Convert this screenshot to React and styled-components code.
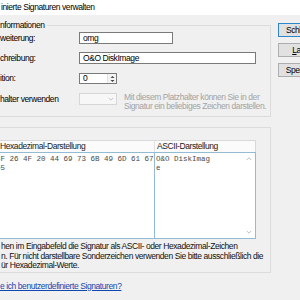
import React from "react";
import styled, { createGlobalStyle } from "styled-components";

const GlobalStyle = createGlobalStyle`
  html, body { margin: 0; padding: 0; overflow: hidden; background: #f0f0f0; }
  body { font-family: "Liberation Sans", Arial, sans-serif; }
`;

const Screen = styled.div`
  width: 300px;
  height: 300px;
  overflow: hidden;
  background: #f0f0f0;
  font-family: "Liberation Sans", Arial, sans-serif;
  font-size: 8.5px;
  letter-spacing: -0.42px;
  color: #000;
  display: flex;
  flex-direction: column;
`;

const TitleBar = styled.div`
  height: 15px;
  line-height: 15px;
  background: #fff;
  padding-left: 1px;
  white-space: nowrap;
  flex-shrink: 0;
`;

const Body = styled.div`
  display: flex;
  align-items: flex-start;
  margin-left: -10px;
`;

const Main = styled.div`
  width: 281px;
  flex-shrink: 0;
  display: flex;
  flex-direction: column;
`;

const Group = styled.fieldset`
  box-sizing: border-box;
  width: 281px;
  min-inline-size: 0;
  margin: ${(p) => p.$top}px 0 0 0;
  padding: ${(p) => p.$pad};
  border: 1px solid #dcdcdc;
`;

const Legend = styled.legend`
  padding: 0 2px 0 0;
  margin: 0;
  line-height: 10px;
  white-space: nowrap;
`;

const FormGrid = styled.div`
  display: grid;
  grid-template-columns: 79px auto;
  grid-template-rows: 12px 12px 12px auto;
  row-gap: 8px;
`;

const Label = styled.div`
  line-height: 12px;
  white-space: nowrap;
  margin-top: ${(p) => p.$mt || 0}px;
`;

const Field = styled.div`
  box-sizing: border-box;
  width: ${(p) => p.$w}px;
  height: 12px;
  border: 1px solid #7a7a7a;
  background: #fff;
  padding-left: 3px;
  line-height: 10px;
  white-space: nowrap;
`;

const Spinner = styled.div`
  box-sizing: border-box;
  width: 38px;
  height: 11px;
  margin-top: 1px;
  border: 1px solid #7a7a7a;
  background: #fff;
  display: flex;
  align-items: stretch;
`;

const SpinValue = styled.div`
  flex: 1;
  padding-left: 3px;
  line-height: 9px;
`;

const SpinButtons = styled.div`
  width: 8px;
  display: flex;
  flex-direction: column;
  align-items: center;
  justify-content: center;
  background: #f4f4f4;
  border-left: 1px solid #e2e2e2;
`;

const PlaceholderRow = styled.div`
  display: flex;
  align-items: flex-start;
  gap: 7px;
`;

const Combo = styled.div`
  box-sizing: border-box;
  width: 38px;
  height: 12px;
  margin-top: 1px;
  border: 1px solid #d6d6d6;
  background: #f7f7f7;
  display: flex;
  justify-content: flex-end;
  align-items: center;
  padding-right: 2px;
  flex-shrink: 0;
`;

const DisabledText = styled.div`
  color: #a3a3a3;
  line-height: 9px;
  margin-top: 1px;
  white-space: nowrap;
`;

const Panel = styled.div`
  width: 265px;
  display: flex;
  flex-direction: column;
`;

const PanelHeader = styled.div`
  display: grid;
  grid-template-columns: 163px 1fr;
  height: 12px;
  box-sizing: border-box;
  border-top: 1px solid #d9d9d9;
  border-right: 1px solid #d9d9d9;
  background: #fbfbfb;
`;

const HeaderCell = styled.div`
  line-height: 11px;
  color: #1a1a1a;
  white-space: nowrap;
  padding-left: ${(p) => p.$pl}px;
  border-left: ${(p) => (p.$sep ? "1px solid #e3e3e3" : "none")};
`;

const PanelBody = styled.div`
  display: grid;
  grid-template-columns: 163px 102px;
  height: 87px;
`;

const HexBox = styled.div`
  box-sizing: border-box;
  border: 1px solid #93bbd2;
  border-right: none;
  background: #fff;
  padding: 2px 0 0 4px;
`;

const AsciiBox = styled.div`
  box-sizing: border-box;
  border: 1px solid #93bbd2;
  background: #fff;
  display: flex;
`;

const AsciiText = styled.div`
  flex: 1;
  padding: 2px 0 0 1px;
`;

const MonoLine = styled.div`
  font-family: "Liberation Mono", "Courier New", monospace;
  font-size: 7.5px;
  letter-spacing: 0;
  line-height: 9px;
  height: 9px;
  color: #4a4a4a;
  white-space: pre;
`;

const ScrollBar = styled.div`
  width: 12px;
  display: flex;
  flex-direction: column;
  justify-content: space-between;
  align-items: center;
  padding: 3px 0;
`;

const Description = styled.div`
  margin-top: 3px;
  padding-left: 10px;
  white-space: nowrap;
  line-height: 9.5px;
  color: #111;
`;

const HelpLink = styled.a`
  display: block;
  margin-top: 8px;
  padding-left: 10px;
  line-height: 10px;
  color: #1048b0;
  text-decoration: underline;
  white-space: nowrap;
`;

const ButtonColumn = styled.div`
  margin-left: 7px;
  padding-top: 8px;
  display: flex;
  flex-direction: column;
  gap: 6px;
  flex-shrink: 0;
`;

const Button = styled.div`
  box-sizing: border-box;
  width: 50px;
  height: 14px;
  line-height: 12px;
  text-align: center;
  background: #e1e1e1;
  border: 1px solid ${(p) => (p.$default ? "#2f86c9" : "#adadad")};
  white-space: nowrap;
`;

const Key = styled.span`
  text-decoration: underline;
`;

const Chevron = ({ up, color = "#b5b5b5" }) => (
  <svg width="6" height="6" viewBox="0 0 6 6">
    <polyline
      points={up ? "0.8,4 3,1.8 5.2,4" : "0.8,2 3,4.2 5.2,2"}
      fill="none"
      stroke={color}
      strokeWidth="0.9"
    />
  </svg>
);

const SpinArrows = () => (
  <svg width="5" height="8" viewBox="0 0 5 8">
    <polygon points="0.5,3 2.5,1 4.5,3" fill="#444" />
    <polygon points="0.5,5 2.5,7 4.5,5" fill="#444" />
  </svg>
);

export default function App() {
  return (
    <>
      <GlobalStyle />
      <Screen>
        <TitleBar>inierte Signaturen verwalten</TitleBar>
        <Body>
          <Main>
            <Group $top={5} $pad="2px 0 5px 9px">
              <Legend>nformationen</Legend>
              <FormGrid>
                <Label>weiterung:</Label>
                <Field $w={94}>omg</Field>
                <Label>chreibung:</Label>
                <Field $w={177}>O&amp;O DiskImage</Field>
                <Label>ition:</Label>
                <Spinner>
                  <SpinValue>0</SpinValue>
                  <SpinButtons>
                    <SpinArrows />
                  </SpinButtons>
                </Spinner>
                <Label $mt={1}>halter verwenden</Label>
                <PlaceholderRow>
                  <Combo>
                    <Chevron color="#bdbdbd" />
                  </Combo>
                  <DisabledText>
                    Mit diesem Platzhalter können Sie in der
                    <br />
                    Signatur ein beliebiges Zeichen darstellen.
                  </DisabledText>
                </PlaceholderRow>
              </FormGrid>
            </Group>

            <Group $top={10} $pad="12px 0 1px 0">
              <Panel>
                <PanelHeader>
                  <HeaderCell $pl={9}>Hexadezimal-Darstellung</HeaderCell>
                  <HeaderCell $pl={2} $sep>
                    ASCII-Darstellung
                  </HeaderCell>
                </PanelHeader>
                <PanelBody>
                  <HexBox>
                    <MonoLine>4F 26 4F 20 44 69 73 6B 49 6D 61 67</MonoLine>
                    <MonoLine>65</MonoLine>
                  </HexBox>
                  <AsciiBox>
                    <AsciiText>
                      <MonoLine>O&amp;O DiskImag</MonoLine>
                      <MonoLine>e</MonoLine>
                    </AsciiText>
                    <ScrollBar>
                      <Chevron up />
                      <Chevron />
                    </ScrollBar>
                  </AsciiBox>
                </PanelBody>
              </Panel>
              <Description>
                hen im Eingabefeld die Signatur als ASCII- oder Hexadezimal-Zeichen
                <br />
                n. Für nicht darstellbare Sonderzeichen verwenden Sie bitte ausschließlich die
                <br />
                ür Hexadezimal-Werte.
              </Description>
            </Group>

            <HelpLink href="#">e ich benutzerdefinierte Signaturen?</HelpLink>
          </Main>

          <ButtonColumn>
            <Button $default>Schließen</Button>
            <Button>
              <Key>L</Key>aden
            </Button>
            <Button>Speichern</Button>
          </ButtonColumn>
        </Body>
      </Screen>
    </>
  );
}
